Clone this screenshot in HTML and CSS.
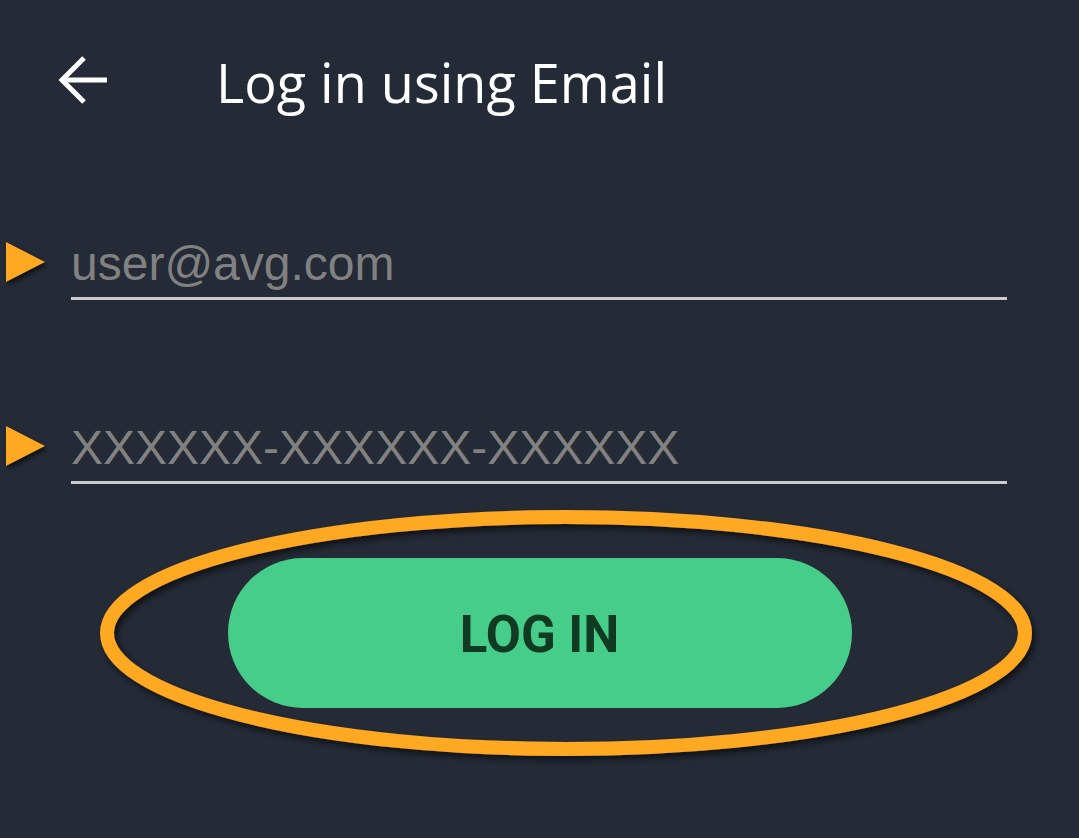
FILE: index.html
```html
<!DOCTYPE html>
<html lang="en">
<head>
    <meta charset="UTF-8">
    <meta name="viewport" content="width=device-width, initial-scale=1.0">
    <title>Log in using Email</title>
    <link rel="stylesheet" href="styles.css">
</head>
<body>
    <div class="screen">
        <header class="top-bar">
            <button class="back" aria-label="Back">
                <svg width="50" height="50" viewBox="0 0 50 50">
                    <path d="M4 24 H49 M26 2 L4 24 L26 46" fill="none" stroke="#fff" stroke-width="5" stroke-linecap="butt" stroke-linejoin="miter"/>
                </svg>
            </button>
            <h1>Log in using Email</h1>
        </header>

        <form class="login-form">
            <div class="field-row">
                <span class="pointer"></span>
                <input type="email" class="field" placeholder="user@avg.com">
            </div>

            <div class="field-row second">
                <span class="pointer"></span>
                <input type="text" class="field" placeholder="XXXXXX-XXXXXX-XXXXXX">
            </div>

            <div class="action">
                <button type="submit" class="login-btn">LOG IN</button>
                <svg class="highlight" width="960" height="270" viewBox="0 0 960 270">
                    <defs>
                        <filter id="shadow" x="-5%" y="-20%" width="110%" height="140%">
                            <feDropShadow dx="3" dy="4" stdDeviation="3" flood-color="#000" flood-opacity="0.6"/>
                        </filter>
                    </defs>
                    <ellipse cx="476" cy="132" rx="459" ry="116" fill="none" stroke="#ffa821" stroke-width="14" filter="url(#shadow)"/>
                </svg>
            </div>
        </form>
    </div>
</body>
</html>
```

FILE: styles.css
```css
html, body {
    margin: 0;
    padding: 0;
    background-color: #242a36;
}

body {
    width: 1079px;
    height: 838px;
    overflow: hidden;
}

.screen {
    display: flex;
    flex-direction: column;
}

.top-bar {
    display: flex;
    align-items: center;
    height: 60px;
    padding: 52px 0 0 58px;
}

.back {
    background: none;
    border: none;
    padding: 0;
    width: 50px;
    height: 50px;
    margin-top: -2px;
}

.back svg {
    display: block;
}

.top-bar h1 {
    margin: 0 0 0 108px;
    font-family: "Open Sans", sans-serif;
    font-weight: 400;
    font-size: 54px;
    color: #fff;
    line-height: 60px;
}

.login-form {
    display: flex;
    flex-direction: column;
    margin-top: 112px;
}

.field-row {
    display: flex;
    align-items: flex-start;
    padding-left: 6px;
}

.field-row.second {
    margin-top: 108px;
}

.pointer {
    width: 0;
    height: 0;
    margin-top: 18px;
    border-top: 20px solid transparent;
    border-bottom: 20px solid transparent;
    border-left: 39px solid #ffa821;
    filter: drop-shadow(2px 3px 2px rgba(0, 0, 0, 0.6));
}

.field {
    box-sizing: border-box;
    margin-left: 26px;
    width: 936px;
    height: 76px;
    padding: 6px 0 0 0;
    background: none;
    border: none;
    border-bottom: 3px solid #cbcbd0;
    font-family: "Liberation Sans", Arial, sans-serif;
    font-size: 48px;
    color: #fff;
    outline: none;
}

.field::placeholder {
    color: #818181;
}

.action {
    position: relative;
    display: flex;
    justify-content: center;
    margin-top: 74px;
    width: 1079px;
}

.login-btn {
    width: 624px;
    height: 150px;
    border: none;
    border-radius: 75px;
    background: #46cd8a;
    color: #113a22;
    font-family: Roboto, sans-serif;
    font-weight: 700;
    font-size: 51px;
    padding-top: 4px;
    cursor: pointer;
}

.highlight {
    position: absolute;
    left: 90px;
    top: -57px;
    pointer-events: none;
}
```
